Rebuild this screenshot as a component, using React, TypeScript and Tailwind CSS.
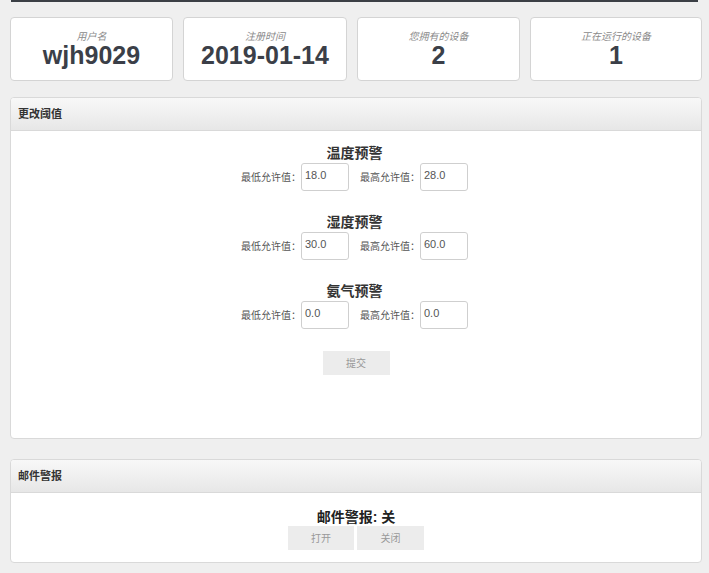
import React from "react";

const font = { fontFamily: '"Liberation Sans", "Noto Sans CJK SC", sans-serif' };

const stats = [
  { label: "用户名", value: "wjh9029" },
  { label: "注册时间", value: "2019-01-14" },
  { label: "您拥有的设备", value: "2" },
  { label: "正在运行的设备", value: "1" },
];

const alarms = [
  { title: "温度预警", low: "18.0", high: "28.0" },
  { title: "湿度预警", low: "30.0", high: "60.0" },
  { title: "氨气预警", low: "0.0", high: "0.0" },
];

function Panel({ title, children }: { title: string; children: React.ReactNode }) {
  return (
    <div className="rounded-[4px] border border-[#d9d9d9] bg-white overflow-hidden">
      <div className="h-[33px] flex items-center px-[7px] border-b border-[#d9d9d9] bg-gradient-to-b from-[#f8f8f8] to-[#e7e7e7] text-[11px] font-bold text-[#333]">
        {title}
      </div>
      {children}
    </div>
  );
}

function Field({ label, value }: { label: string; value: string }) {
  return (
    <div className="flex items-center">
      <span className="text-[10px] text-[#555] w-[60px]">{label}</span>
      <div className="w-[48px] h-[28px] rounded-[3px] border border-[#cfcfcf] flex items-center pl-[3px] pb-[3px] text-[11px] text-[#555]">
        {value}
      </div>
    </div>
  );
}

export default function App() {
  return (
    <div className="min-h-[573px] bg-[#efefef]" style={font}>
      <div className="mx-[11px] h-[2px] bg-[#3b3f45]" />

      <div className="grid grid-cols-[163px_164px_163px_172px] gap-[10px] px-[10px] pt-[15px]">
        {stats.map((s) => (
          <div
            key={s.label}
            className="h-[64px] rounded-[4px] border border-[#d4d4d4] bg-white flex flex-col items-center justify-center"
          >
            <span className="text-[10px] leading-[12px] italic text-[#8a8a8a]">{s.label}</span>
            <span className="text-[25px] leading-[24px] font-bold text-[#3b3f48]">{s.value}</span>
          </div>
        ))}
      </div>

      <div className="pl-[10px] pr-[7px] pt-[16px] flex flex-col gap-[20px]">
        <Panel title="更改阈值">
          <div className="h-[307px] flex flex-col items-center pt-[13px] pr-[3px]">
            {alarms.map((a) => (
              <div key={a.title} className="flex flex-col items-center mb-[22px]">
                <span className="text-[14px] leading-[19px] font-bold text-[#333]">{a.title}</span>
                <div className="flex items-center gap-[11px]">
                  <Field label="最低允许值：" value={a.low} />
                  <Field label="最高允许值：" value={a.high} />
                </div>
              </div>
            ))}
            <button className="w-[67px] h-[24px] bg-[#ececec] text-[10px] text-[#999] ml-[3px]">提交</button>
          </div>
        </Panel>

        <Panel title="邮件警报">
          <div className="flex flex-col items-center pt-[15px] pb-[12px]">
            <span className="text-[14px] leading-[18px] font-bold text-[#222]">邮件警报: 关</span>
            <div className="flex gap-[3px]">
              <button className="w-[66px] h-[24px] bg-[#ececec] text-[10px] text-[#999]">打开</button>
              <button className="w-[67px] h-[24px] bg-[#ececec] text-[10px] text-[#999]">关闭</button>
            </div>
          </div>
        </Panel>
      </div>
    </div>
  );
}
